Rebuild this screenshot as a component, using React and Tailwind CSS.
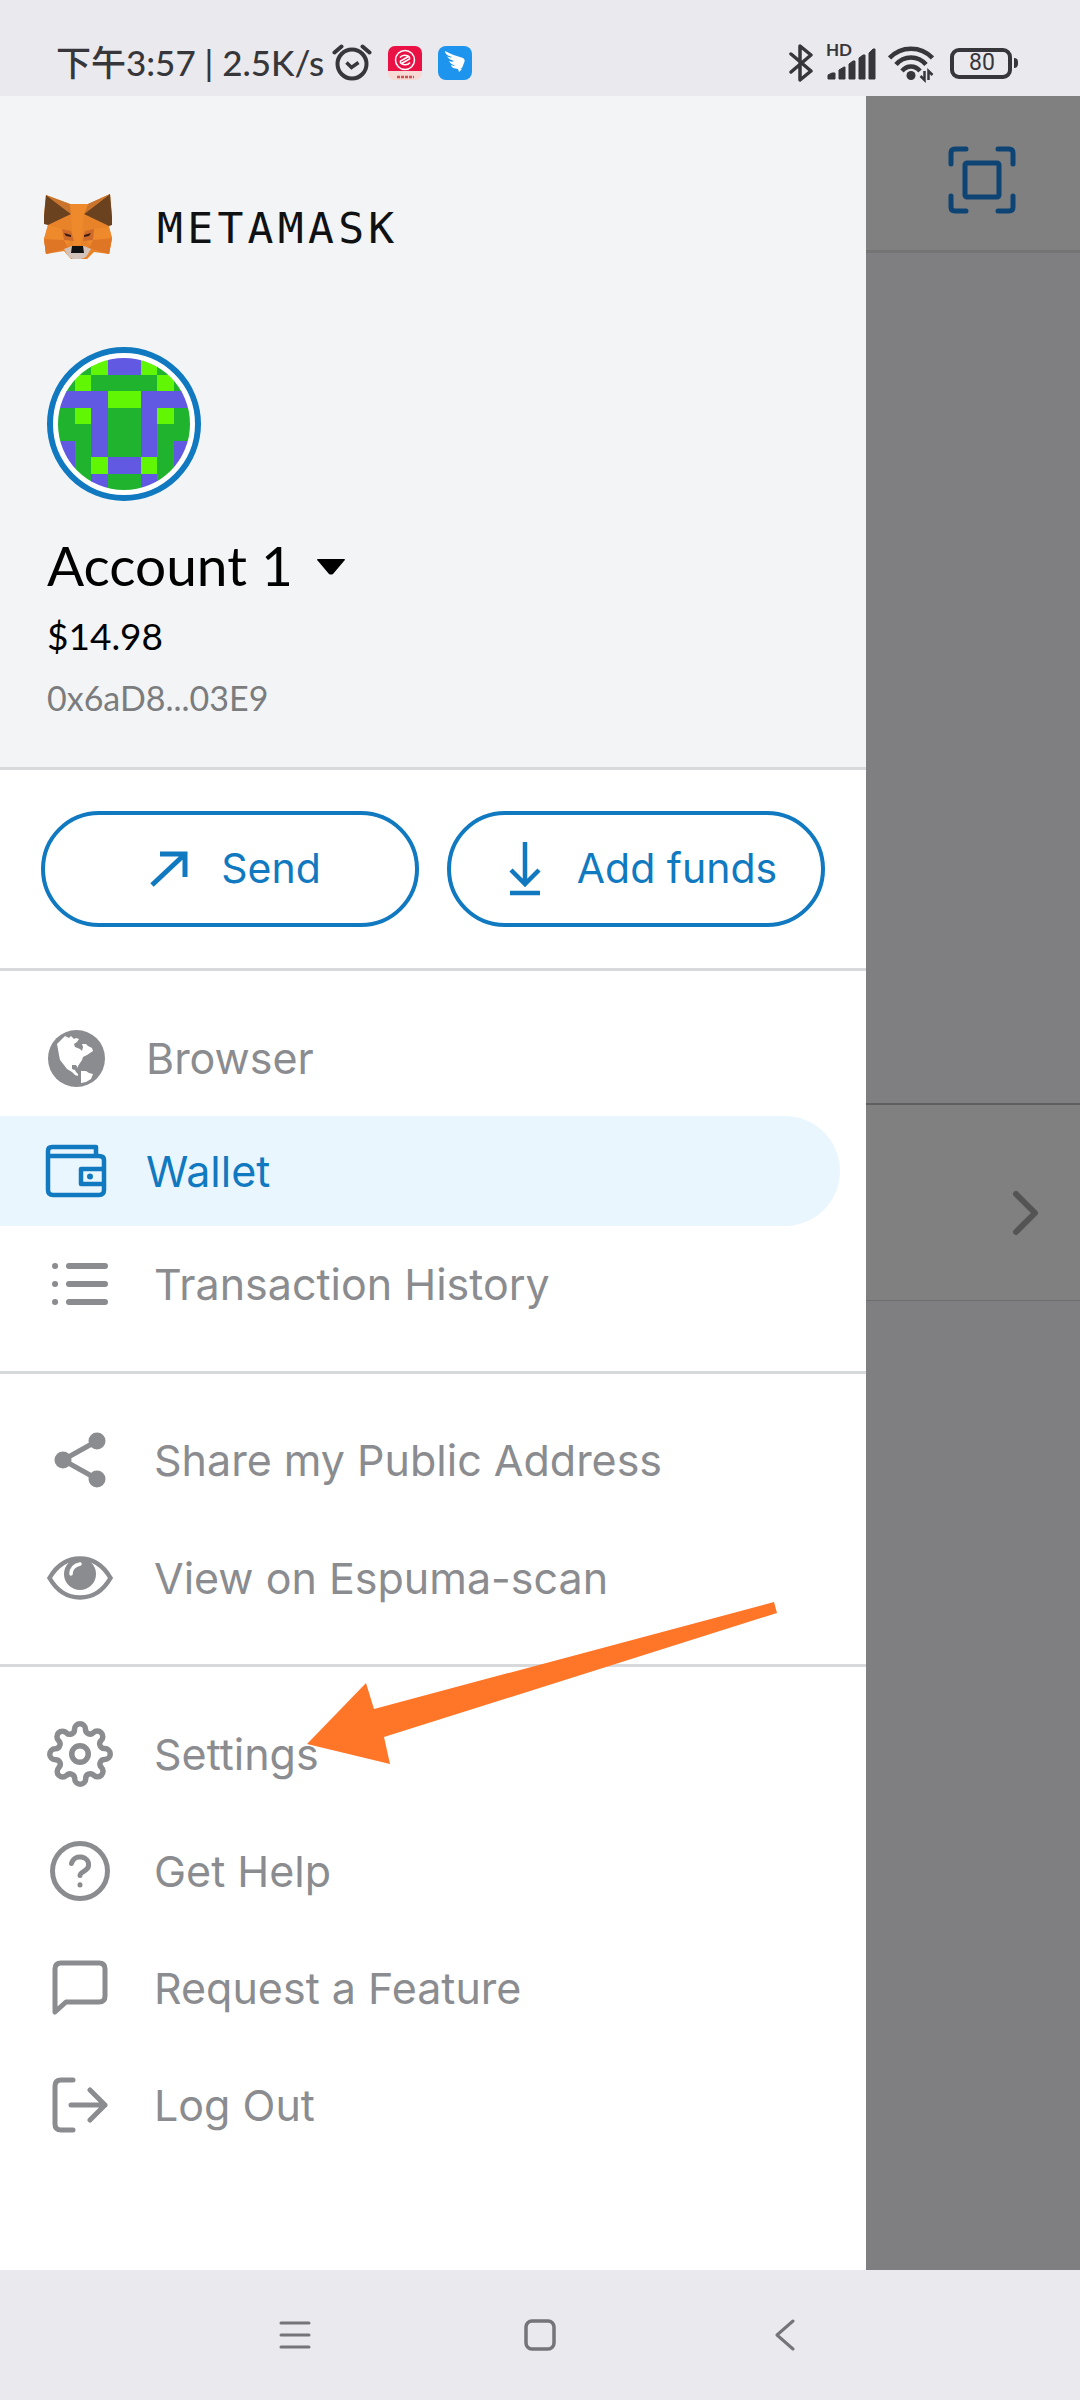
import { FiSettings } from "react-icons/fi";

const PIXELS = [
  "GGLPPLGG",
  "GLGGGGLG",
  "PPPLLPPP",
  "GLPGGPLG",
  "GGPGGPGG",
  "PGPGGPGP",
  "PGLPPLGP",
  "GGPGGPGG",
];
const PIXEL_COLORS = { G: "#1fb32e", L: "#60f604", P: "#6159e2" };

function StatusBar() {
  return (
    <header className="flex h-24 items-center justify-between bg-[#eae9ed] pr-[62px] pl-14 pt-[30px] text-[#37373b]">
      <div className="flex h-[66px] items-start gap-4">
        <div className="flex items-center gap-2 pt-[10px]">
          <span className="font-[Lato,'Noto_Sans_CJK_SC',sans-serif] text-[35px] leading-[44px] font-medium whitespace-nowrap">下午3:57 | 2.5K/s</span>
          <svg className="h-10 w-10" viewBox="0 0 40 40" fill="none" stroke="currentColor" strokeLinecap="round" aria-label="Alarm" role="img">
            <circle cx="20" cy="22" r="14.5" strokeWidth="4" />
            <path d="M14.500 20.500l5 5 7-5" strokeWidth="3.500" strokeLinecap="butt" />
            <path d="M2.500 10.500l7-6M37.500 10.500l-7-6" strokeWidth="4" />
          </svg>
        </div>
        <svg className="mt-4 h-[34px] w-[34px]" viewBox="0 0 34 34" aria-label="Red app" role="img">
          <rect width="34" height="34" rx="7" fill="#f7d9d6" />
          <path d="M0 25V7a7 7 0 0 1 7-7h20a7 7 0 0 1 7 7v18z" fill="#ea1144" />
          <g fill="none" stroke="#fff" strokeWidth="1.500">
            <circle cx="17" cy="14" r="9.500" />
            <path d="M12 11.500c3-4 11-2 9.500 1.500l-8 4.500M22 16.500c-3 4-11 2-9.500-1.500l8-4.500" />
          </g>
          <path d="M9 31h17" stroke="#d0504c" strokeWidth="2.500" strokeDasharray="3 1" />
        </svg>
        <svg className="mt-4 h-[34px] w-[34px]" viewBox="0 0 34 34" aria-label="Wing app" role="img">
          <rect width="34" height="34" rx="8" fill="#1d94ed" />
          <path d="M7 5c5 3 12 5 18 7 2 1 2 3 1 5l-2 5h-2l2 1-3 3-1-3-5-1c-1-1-2-2-2-3 2 1 3 1 4 0-3 0-5-2-6-4 2 1 4 1 5 0-4-1-6-3-7-5 1 1 4 2 5 1-4-1-7-3-7-6z" fill="#fff" />
        </svg>
      </div>
      <div className="flex h-[66px] items-start gap-3 pt-[13px]">
        <svg className="h-10 w-[25px]" viewBox="0 0 25 40" fill="none" stroke="currentColor" strokeWidth="3.500" strokeLinejoin="round" strokeLinecap="round" aria-label="Bluetooth" role="img">
          <path d="M2 11l20 17-11 9V3l11 9L2 29" />
        </svg>
        <div className="relative h-10 w-[50px]">
          <span className="absolute -top-px left-0 font-[Lato,sans-serif] text-[17px] leading-4 font-bold">HD</span>
          <svg className="h-10 w-[50px]" viewBox="0 0 50 40" fill="currentColor" aria-label="Signal" role="img">
            <path d="M2 36v-4l4-2h3v6zM13 36V27l5-3h1v12zM23 36V21l4-3h2v18zM33 36V15l4-3h2v24zM43 36V10l4-4h2v30z" stroke="currentColor" strokeLinejoin="round" />
          </svg>
        </div>
        <svg className="h-10 w-[46px]" viewBox="0 0 46 40" fill="none" stroke="currentColor" strokeWidth="4.500" aria-label="Wi-Fi" role="img">
          <path d="M1.500 15C13 2.500 33 2.500 44.500 15M8 21.500c8-9.500 22-9.500 30 0M14 28c5-6 13-6 18 0" />
          <circle cx="23" cy="32.500" r="4.500" fill="currentColor" stroke="none" />
          <path d="M36.500 28v9l-4-4M40.500 37v-9l4 4" strokeWidth="2.500" />
        </svg>
        <div className="flex h-10 items-center gap-0.5 pl-1">
          <div className="flex h-[31px] w-[62px] items-center justify-center rounded-[9px] border-4 border-[#37373b] pl-0.5 font-[Roboto,sans-serif] text-[23px] leading-6">
            80
          </div>
          <div className="h-[10px] w-1 rounded-r-sm bg-[#37373b]" />
        </div>
      </div>
    </header>
  );
}

function FoxLogo() {
  return (
    <svg className="h-[68px] w-[70px]" viewBox="13 14 70 68" aria-label="Fox" role="img">
      <path d="M16 15l24 9h18l22-10 2 24-3 9 3 11-3 16-15-2-7 7H41l-7-8-18 3-2-15 4-14-4-10z" fill="#e8832a" />
      <path d="M16 15l25 19-23 11-4-1v-8z" fill="#6b4220" />
      <path d="M80 14L54 34l25 12 3-1V37z" fill="#6b4220" />
      <path d="M16 15l24 9 1 10z" fill="#c9752d" />
      <path d="M80 14l-22 10-4 10z" fill="#c9752d" />
      <path d="M40 24h18l-4 10-3 31h-8l-2-31z" fill="#ee8a2c" />
      <path d="M18 45l14 4 9 12-7 7-18 6-2-15zM79 47l-15 2-7 12 5 7 17 6 3-16z" fill="#ef8a2c" />
      <path d="M14 59l20 1 4 8-22 6zM82 58l-19 2-4 8 20 6z" fill="#df7626" />
      <path d="M32 49l9 2 3 10-10-1zM64 49l-9 2-2 10 10-1z" fill="#cf6b2a" />
      <path d="M34 53l7 2v2l-5-1zM61 53l-7 2v2l5-1z" fill="#401c10" />
      <path d="M34 69l8-3h12l7 3-5 8-5 2h-8l-4-2z" fill="#d3c4bb" />
      <path d="M42 66h11l1 7H41z" fill="#111214" />
    </svg>
  );
}

function Identicon() {
  return (
    <svg className="h-[154px] w-[154px]" viewBox="0 0 154 154" aria-label="Account avatar" role="img">
      <defs>
        <clipPath id="avatar">
          <circle cx="77" cy="77" r="66" />
        </clipPath>
      </defs>
      <circle cx="77" cy="77" r="74" fill="#fff" stroke="#1079c0" strokeWidth="6" />
      <g clipPath="url(#avatar)" shapeRendering="crispEdges">
        {PIXELS.map((row, y) =>
          row.split("").map((c, x) => (
            <rect key={`${x}-${y}`} x={11 + x * 16.5} y={11 + y * 16.5} width="17" height="17" fill={PIXEL_COLORS[c]} />
          ))
        )}
      </g>
    </svg>
  );
}

function AccountHeader() {
  return (
    <div className="border-b-[3px] border-[#d8d9db] bg-[#f2f4f6] px-[47px] pt-[98px] pb-[42px] font-[Lato,sans-serif]">
      <div className="-ml-1 flex items-center gap-11">
        <FoxLogo />
        <span className="font-['DejaVu_Sans_Mono',monospace] text-[43px] leading-[64px] tracking-widest text-[#101112]">METAMASK</span>
      </div>
      <div className="mt-[85px]">
        <Identicon />
      </div>
      <button type="button" className="mt-[30px] flex items-center gap-6 text-[55px] leading-[68px] text-black">
        Account 1
        <svg className="mt-1 h-4 w-7" viewBox="0 0 28 16" aria-hidden="true">
          <path d="M1 0h26q2 0 0 2L16 15q-2 1-4 0L1 2q-2-2 0-2z" />
        </svg>
      </button>
      <p className="mt-[10px] text-[37px] leading-[54px] text-black">$14.98</p>
      <p className="mt-2 text-[34px] leading-[54px] text-[#7b7c7e]">0x6aD8...03E9</p>
    </div>
  );
}

function ActionButton({ icon, children }) {
  return (
    <button type="button" className="flex h-[116px] flex-1 items-center justify-center gap-[22px] rounded-full border-4 border-[#1079c0] text-[41px] text-[#1079c0]">
      <span className="flex w-[60px] justify-center">{icon}</span>
      {children}
    </button>
  );
}

const stroke = { fill: "none", stroke: "currentColor", "aria-hidden": true };

const icons = {
  browser: (
    <svg className="h-[57px] w-[57px]" viewBox="0 0 57 57" aria-hidden="true">
      <circle cx="28.500" cy="28.500" r="28.500" fill="currentColor" />
      <path
        d="M9 14l4-4 4-4 4 2 2-2 3 3 2-1 3 1-2 3-3 2 1 3 5 2 2 2 1-4-1-3 4 0 2 2 4 2 1 3-3 2-3 2-4 2-1 3-2 3-2 3 0 2-2-3-4 0 0 4 3 1 1 2 2 2 0 2-3-1-3-3-5-3-3-4-4-5-1-5z"
        fill="#fff"
      />
      <path d="M33 41l5 0 3 2 4 1-2 5-5 3-5 1z" fill="#fff" />
    </svg>
  ),
  wallet: (
    <svg className="h-[54px] w-[62px]" viewBox="0 0 62 54" {...stroke} strokeWidth="4.500" strokeLinejoin="round">
      <path d="M3 11V46q0 5 5 5H54q5 0 5-5V16q0-4-5-4H3V7q0-4 4-4H51V12" />
      <path d="M59 25H36V40H59" />
      <circle cx="45" cy="32.500" r="3" fill="currentColor" stroke="none" />
    </svg>
  ),
  list: (
    <svg className="h-11 w-[56px]" viewBox="0 0 56 44" {...stroke} strokeWidth="6" strokeLinecap="round">
      <path d="M17 4h36M17 22h36M17 40h36M3 4h.1M3 22h.1M3 40h.1" />
    </svg>
  ),
  share: (
    <svg className="h-14 w-[52px]" viewBox="0 0 52 56" {...stroke} strokeWidth="5">
      <path d="M43 9L9 28l34 19" />
      <g fill="currentColor" stroke="none">
        <circle cx="43" cy="9" r="8.500" />
        <circle cx="9" cy="28" r="8.500" />
        <circle cx="43" cy="47" r="8.500" />
      </g>
    </svg>
  ),
  eye: (
    <svg className="h-11 w-[66px]" viewBox="0 0 66 44" {...stroke}>
      <path d="M2.500 22C10 9 21 2.500 33 2.500S56 9 63.500 22C56 35 45 41.500 33 41.500S10 35 2.500 22z" strokeWidth="4.500" />
      <circle cx="33" cy="18" r="16" fill="currentColor" stroke="none" />
      <path d="M24 18q0-8 9-10" stroke="#fff" strokeWidth="3.500" strokeLinecap="round" />
    </svg>
  ),
  settings: <FiSettings className="h-[66px] w-[66px]" />,
  help: (
    <svg className="h-[60px] w-[60px]" viewBox="0 0 60 60" {...stroke} strokeWidth="5" strokeLinecap="round">
      <circle cx="30" cy="30" r="27.500" />
      <path d="M21.500 22.500C24 12 40 15 38.500 25c-.5 5-8.500 5.500-8.500 9.500M30 43.800v.2" />
    </svg>
  ),
  chat: (
    <svg className="h-14 w-14" viewBox="0 0 56 56" {...stroke} strokeWidth="5" strokeLinejoin="round">
      <path d="M3 52V9q0-6 6-6H47q6 0 6 6V36q0 6-6 6H14z" />
    </svg>
  ),
  logout: (
    <svg className="h-14 w-14" viewBox="0 0 56 56" {...stroke} strokeWidth="5" strokeLinecap="round" strokeLinejoin="round">
      <path d="M21 3H9Q3 3 3 9V47q0 6 6 6H21M19 28H53M38 13L53 28 38 43" />
    </svg>
  ),
};

function MenuItem({ icon, label, active, tight }) {
  return (
    <li>
      <button
        type="button"
        aria-current={active ? "page" : undefined}
        className={`flex h-[110px] w-full items-center rounded-r-full pl-11 text-left text-[43px] whitespace-nowrap ${tight ? "gap-[22px]" : "gap-[38px]"} ${active ? "bg-[#eaf6fe] text-[#1079c0]" : "text-[#8b8c8f]"}`}
      >
        <span className={`flex justify-center ${tight ? "w-20 pr-4" : "w-[72px]"}`}>{icon}</span>
        {label}
      </button>
    </li>
  );
}

function PointerArrow() {
  return (
    <svg className="pointer-events-none absolute -top-[68px] left-[306px] h-[166px] w-[472px]" viewBox="0 0 472 166" aria-hidden="true">
      <path d="M1 145L60 84l8 26L468 3l3 11L78 138l6 27z" fill="#ff7628" />
    </svg>
  );
}

function Drawer() {
  return (
    <aside className="flex flex-col bg-white">
      <AccountHeader />
      <div className="flex gap-7 border-b-[3px] border-[#d8d9db] px-[41px] py-[41px]">
        <ActionButton
          icon={
            <svg className="h-9 w-[38px]" viewBox="0 0 38 36" {...stroke} strokeWidth="5">
              <path d="M2 34L34 4M10 3H35V26" />
            </svg>
          }
        >
          Send
        </ActionButton>
        <ActionButton
          icon={
            <svg className="h-[54px] w-8" viewBox="0 0 32 54" {...stroke} strokeWidth="4.500">
              <path d="M16 0V43M2 28L16 42 30 28M1 51H31" />
            </svg>
          }
        >
          Add funds
        </ActionButton>
      </div>
      <nav aria-label="Main menu">
        <ul className="flex flex-col gap-[3px] border-b-[3px] border-[#d8d9db] py-8 pr-[26px]">
          <MenuItem tight icon={icons.browser} label="Browser" />
          <MenuItem tight active icon={icons.wallet} label="Wallet" />
          <MenuItem icon={icons.list} label="Transaction History" />
        </ul>
        <ul className="flex flex-col gap-2 border-b-[3px] border-[#d8d9db] py-[31px]">
          <MenuItem icon={icons.share} label="Share my Public Address" />
          <MenuItem icon={icons.eye} label="View on Espuma-scan" />
        </ul>
        <ul className="relative flex flex-col gap-[7px] py-8">
          <MenuItem icon={icons.settings} label="Settings" />
          <MenuItem icon={icons.help} label="Get Help" />
          <MenuItem icon={icons.chat} label="Request a Feature" />
          <MenuItem icon={icons.logout} label="Log Out" />
          <PointerArrow />
        </ul>
      </nav>
    </aside>
  );
}

function DimmedWallet() {
  return (
    <section className="flex flex-col bg-[#7f7f81]" aria-label="Wallet">
      <div className="flex h-[157px] items-center justify-end border-b-[3px] border-[#747474] bg-[#808080] pt-[14px] pr-16">
        <button type="button" aria-label="Scan code" className="text-[#0d4474]">
          <svg className="h-[68px] w-[68px]" viewBox="0 0 68 68" {...stroke} strokeWidth="5" strokeLinecap="round" strokeLinejoin="round">
            <path d="M3 18V7q0-4 4-4H18M50 3H61q4 0 4 4V18M65 50V61q0 4-4 4H50M18 65H7q-4 0-4-4V50" />
            <rect x="17" y="17" width="34" height="34" rx="2" />
          </svg>
        </button>
      </div>
      <div className="h-[850px]" />
      <button type="button" aria-label="Open" className="flex h-[198px] items-center justify-end border-t-2 border-b border-t-[#5f5f5f] border-b-[#6e6e70] bg-[#808080] pt-5 pr-10 text-[#545454]">
        <svg className="h-[46px] w-7" viewBox="0 0 28 46" {...stroke} strokeWidth="6" strokeLinecap="round" strokeLinejoin="round">
          <path d="M4 4L23 23 4 42" />
        </svg>
      </button>
    </section>
  );
}

function NavigationBar() {
  return (
    <footer className="grid h-[130px] grid-cols-3 place-items-center bg-[#eae9ed] px-[16%] text-[#757478]">
      <button type="button" aria-label="Recent apps">
        <svg className="h-8 w-8" viewBox="0 0 32 32" {...stroke} strokeWidth="3" strokeLinecap="round">
          <path d="M2 4h28M2 16h28M2 28h28" />
        </svg>
      </button>
      <button type="button" aria-label="Home">
        <svg className="h-8 w-8" viewBox="0 0 32 32" {...stroke} strokeWidth="3.500">
          <rect x="2" y="2" width="28" height="28" rx="6" />
        </svg>
      </button>
      <button type="button" aria-label="Back">
        <svg className="h-8 w-5" viewBox="0 0 20 32" {...stroke} strokeWidth="3" strokeLinecap="round" strokeLinejoin="round">
          <path d="M18 2L2 16 18 30" />
        </svg>
      </button>
    </footer>
  );
}

export default function App() {
  return (
    <div className="flex min-h-screen flex-col font-[Inter,sans-serif]">
      <StatusBar />
      <main className="grid flex-1 grid-cols-[866fr_214fr]">
        <Drawer />
        <DimmedWallet />
      </main>
      <NavigationBar />
    </div>
  );
}
